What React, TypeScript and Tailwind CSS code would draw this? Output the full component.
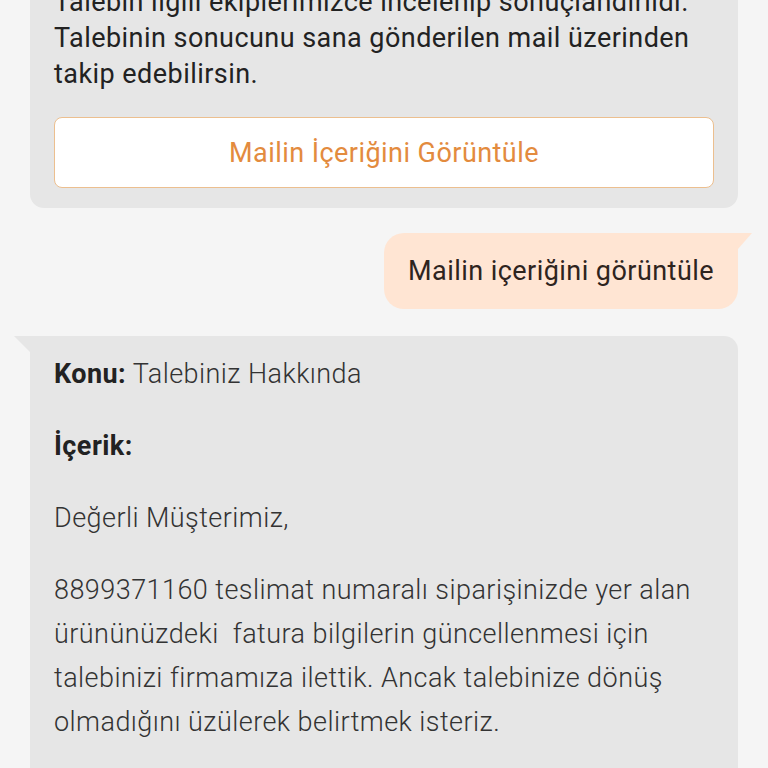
export default function App() {
  return (
    <div className="min-h-[768px] bg-[#f5f5f5] overflow-hidden font-['Roboto',sans-serif] tracking-[0.45px]">
      <div className="mt-[-40px] px-[30px] flex flex-col">
        {/* bot message with action button */}
        <div className="bg-[#e6e6e6] rounded-[14px] px-6 pt-6 pb-5 text-[27px] leading-[36px] text-[#222]">
          <p>Talebin ilgili ekiplerimizce incelenip sonuçlandırıldı.</p>
          <p>Talebinin sonucunu sana gönderilen mail üzerinden takip edebilirsin.</p>
          <button className="mt-[25px] w-full h-[71px] bg-white border border-[#ecbf8f] rounded-lg text-[#e38b3e] text-[27px]">
            Mailin İçeriğini Görüntüle
          </button>
        </div>

        {/* user message */}
        <div className="mt-[25px] self-end relative">
          <div className="bg-[#ffe5d3] rounded-[20px] rounded-tr-none px-6 h-[76px] flex items-center text-[27px] text-[#2e241e]">
            Mailin içeriğini görüntüle
          </div>
          <svg className="absolute top-0 right-[-14px]" width="14" height="16" viewBox="0 0 14 16">
            <polygon points="0,0 14,0 0,16" fill="#ffe5d3" />
          </svg>
        </div>

        {/* mail content */}
        <div className="mt-[27px] relative">
          <svg className="absolute top-0 left-[-16px]" width="16" height="16" viewBox="0 0 16 16">
            <polygon points="0,0 16,0 16,16" fill="#e6e6e6" />
          </svg>
          <div className="bg-[#e6e6e6] rounded-[14px] rounded-tl-none px-6 pt-4 pb-10 text-[27px] leading-[44px] text-[#333] font-light">
            <p className="mb-[28px]">
              <span className="font-bold text-[#222]">Konu:</span> Talebiniz Hakkında
            </p>
            <p className="mb-[28px] font-bold text-[#222]">İçerik:</p>
            <p className="mb-[28px]">Değerli Müşterimiz,</p>
            <p className="mb-[28px] whitespace-pre-wrap">
              {"8899371160 teslimat numaralı siparişinizde yer alan ürününüzdeki  fatura bilgilerin güncellenmesi için talebinizi firmamıza ilettik. Ancak talebinize dönüş olmadığını üzülerek belirtmek isteriz."}
            </p>
          </div>
        </div>
      </div>
    </div>
  )
}
